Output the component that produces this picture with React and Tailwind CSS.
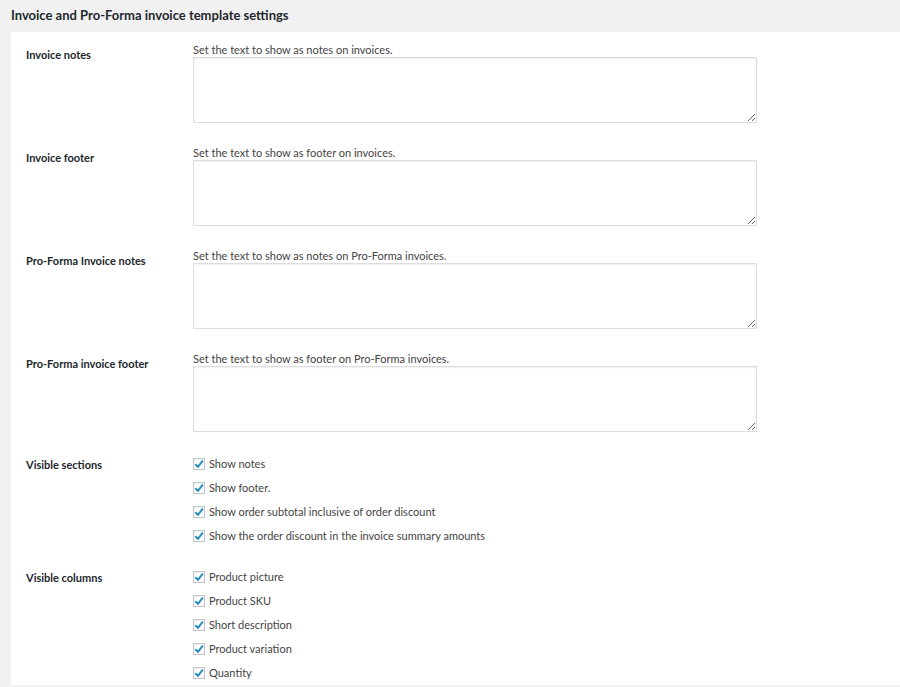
import React from 'react';

const textRows = [
  { label: 'Invoice notes', desc: 'Set the text to show as notes on invoices.' },
  { label: 'Invoice footer', desc: 'Set the text to show as footer on invoices.' },
  { label: 'Pro-Forma Invoice notes', desc: 'Set the text to show as notes on Pro-Forma invoices.' },
  { label: 'Pro-Forma invoice footer', desc: 'Set the text to show as footer on Pro-Forma invoices.' },
];

const sections = [
  'Show notes',
  'Show footer.',
  'Show order subtotal inclusive of order discount',
  'Show the order discount in the invoice summary amounts',
];

const columns = ['Product picture', 'Product SKU', 'Short description', 'Product variation', 'Quantity'];

const Check = ({ label }) => (
  <label className="flex items-center h-[24px] gap-[4px] text-[11px] text-[#444]">
    <span className="w-[12px] h-[12px] border border-[#c3c7cb] bg-white shadow-[inset_0_1px_2px_rgba(0,0,0,0.08)] flex items-center justify-center shrink-0">
      <svg width="10" height="10" viewBox="0 0 10 10">
        <path d="M1.3 5.2L4 7.8 8.8 1.6" fill="none" stroke="#1e8cbe" strokeWidth="1.9" />
      </svg>
    </span>
    <span>{label}</span>
  </label>
);

export default function App() {
  return (
    <div className="h-[687px] bg-[#f1f1f1] overflow-hidden" style={{ fontFamily: 'Lato, "Open Sans", sans-serif' }}>
      <h2 className="h-[32px] pl-[11px] pt-[6px] text-[13px] font-bold text-[#23282d]">
        Invoice and Pro-Forma invoice template settings
      </h2>
      <div className="ml-[11px] h-[653px] bg-white overflow-hidden pl-[15px]">
        {textRows.map((r) => (
          <div key={r.label} className="flex">
            <div className="w-[167px] shrink-0 pt-[16px] text-[11px] leading-[14px] font-bold text-[#23282d]">{r.label}</div>
            <div className="pt-[11px] pb-[12px]">
              <div className="text-[11px] leading-[14px] text-[#444]">{r.desc}</div>
              <textarea className="block w-[564px] h-[66px] border border-[#dddddd] shadow-[inset_0_1px_2px_rgba(0,0,0,0.07)] resize-y bg-white" />
            </div>
          </div>
        ))}
        <div className="flex">
          <div className="w-[167px] shrink-0 pt-[14px] text-[11px] leading-[14px] font-bold text-[#23282d]">Visible sections</div>
          <div className="pt-[8px] pb-[9px]">
            {sections.map((s) => <Check key={s} label={s} />)}
          </div>
        </div>
        <div className="flex">
          <div className="w-[167px] shrink-0 pt-[14px] text-[11px] leading-[14px] font-bold text-[#23282d]">Visible columns</div>
          <div className="pt-[8px] pb-[9px]">
            {columns.map((s) => <Check key={s} label={s} />)}
          </div>
        </div>
      </div>
    </div>
  );
}
